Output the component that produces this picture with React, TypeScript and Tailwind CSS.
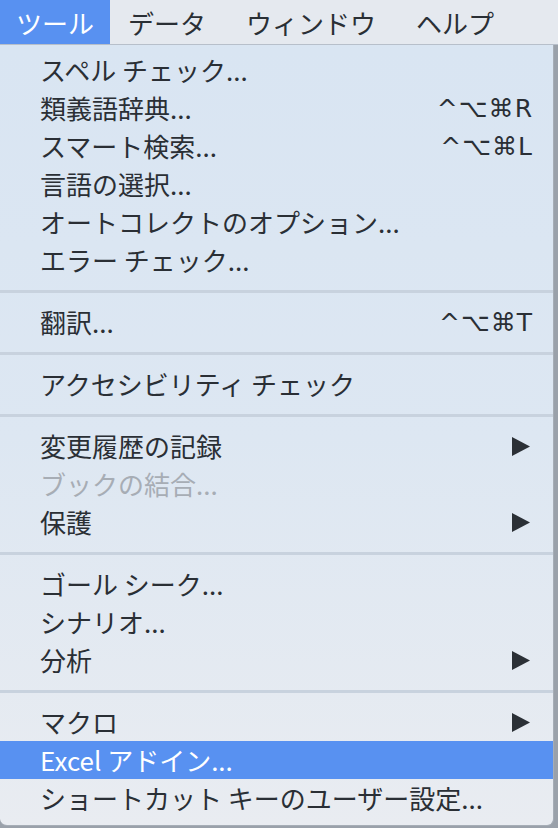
import React from "react";

type Item = {
  label: string;
  shortcut?: string;
  submenu?: boolean;
  disabled?: boolean;
  active?: boolean;
};

const groups: Item[][] = [
  [
    { label: "スペル チェック..." },
    { label: "類義語辞典...", shortcut: "R" },
    { label: "スマート検索...", shortcut: "L" },
    { label: "言語の選択..." },
    { label: "オートコレクトのオプション..." },
    { label: "エラー チェック..." },
  ],
  [{ label: "翻訳...", shortcut: "T" }],
  [{ label: "アクセシビリティ チェック" }],
  [
    { label: "変更履歴の記録", submenu: true },
    { label: "ブックの結合...", disabled: true },
    { label: "保護", submenu: true },
  ],
  [
    { label: "ゴール シーク..." },
    { label: "シナリオ..." },
    { label: "分析", submenu: true },
  ],
  [
    { label: "マクロ", submenu: true },
    { label: "Excel アドイン...", active: true },
    { label: "ショートカット キーのユーザー設定..." },
  ],
];

const jp = "font-['Hiragino_Sans','Noto_Sans_CJK_JP',sans-serif]";

const Row = ({ item }: { item: Item }) => {
  const color = item.active
    ? "bg-[#5891f1] text-white"
    : item.disabled
    ? "text-[#a7adb5]"
    : "text-[#2a2f35]";
  return (
    <div className={`flex h-[38px] items-center pl-10 pr-[20px] ${color}`}>
      <span className={`flex-1 text-[26px] leading-none ${jp}`}>{item.label}</span>
      {item.shortcut && (
        <span className="text-[25px] leading-none font-['DejaVu_Sans','Liberation_Sans',sans-serif] tracking-[1px]">
          ^⌥⌘{item.shortcut}
        </span>
      )}
      {item.submenu && (
        <svg width="19" height="19" viewBox="0 0 19 19" className="mr-[3px]">
          <path d="M1 0 L19 9.5 L1 19 Z" fill="#2b3036" />
        </svg>
      )}
    </div>
  );
};

const App = () => {
  return (
    <div className="h-[828px] w-[558px] overflow-hidden bg-[#9aa1aa]">
      <div className={`flex h-[45px] items-stretch border-b border-[#b7bfca] bg-[#e5e9ef] text-[26px] text-[#2a2f35] ${jp}`}>
        <div className="flex w-[110px] items-center justify-center bg-[#5891f1] text-white">ツール</div>
        <div className="flex items-center pl-[18px]">データ</div>
        <div className="flex items-center pl-[40px]">ウィンドウ</div>
        <div className="flex items-center pl-[40px]">ヘルプ</div>
        <div className="flex-1" />
      </div>
      <div className="w-[554px] rounded-b-[7px] border-r border-b border-[#a6adb6] bg-gradient-to-b from-[#d9e5f2] via-[#dde7f2] to-[#e9ecf1] pt-[6px] pb-[8px]">
        {groups.map((g, gi) => (
          <div key={gi}>
            {gi > 0 && (
              <div className="flex h-[24px] items-center">
                <div className="h-[3px] w-full bg-[#c8d2de]" />
              </div>
            )}
            {g.map((item) => (
              <Row key={item.label} item={item} />
            ))}
          </div>
        ))}
      </div>
    </div>
  );
};

export default App;
